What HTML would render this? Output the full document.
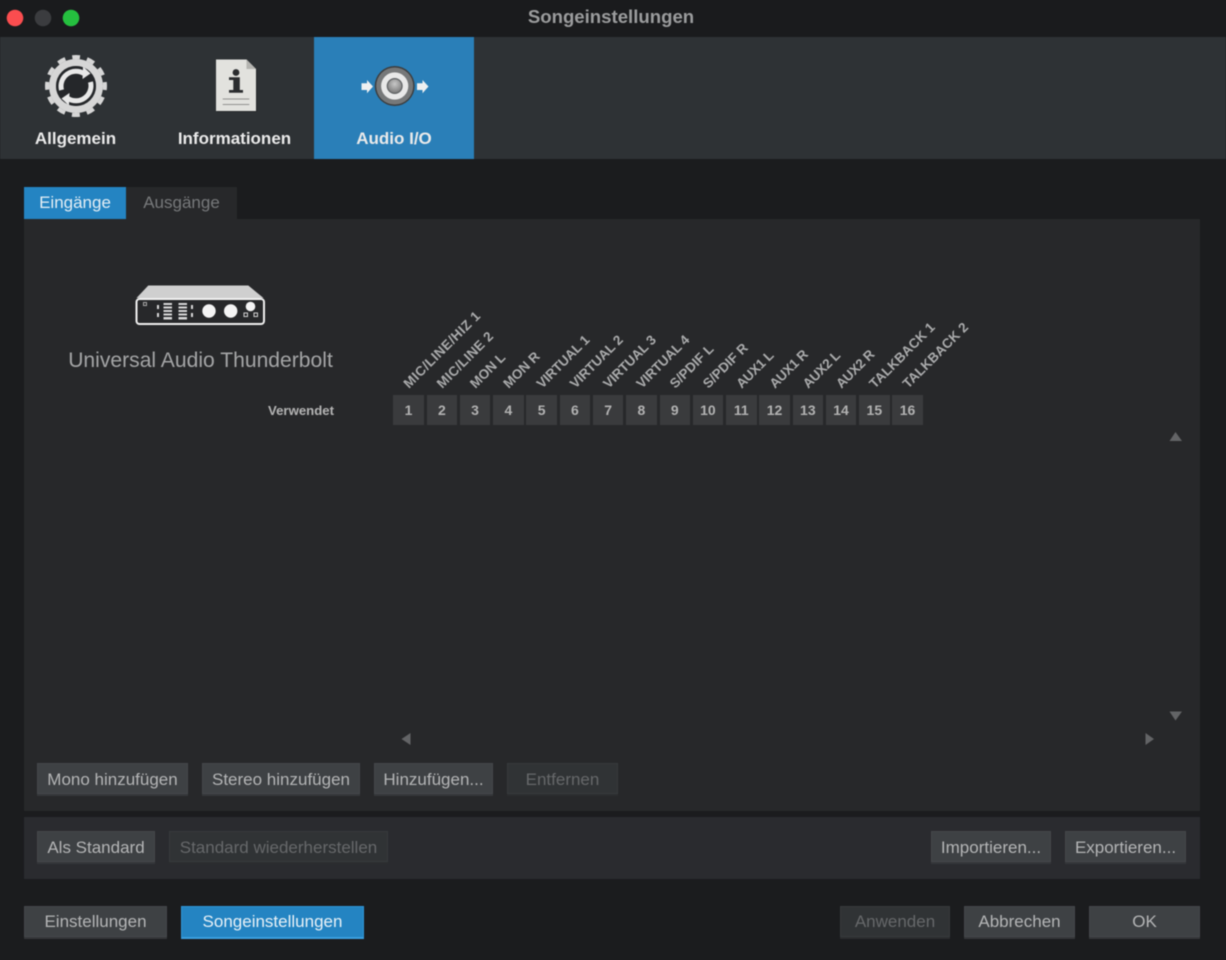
<!DOCTYPE html>
<html lang="de"><head><meta charset="utf-8"><title>Songeinstellungen</title>
<style>
html,body{margin:0;padding:0;background:#1b1c1e}
body{width:1226px;height:960px;position:relative;overflow:hidden;font-family:"Liberation Sans",sans-serif}
#w{position:absolute;left:0;top:0;width:1226px;height:960px;filter:blur(.45px)}
.a{position:absolute}
.b{position:absolute;box-sizing:border-box;height:33px;background:#3e4144;border-bottom:2px solid #35373a;box-shadow:inset 0 0 0 1px rgba(255,255,255,.035);color:#b4b5b6;font-size:17px;line-height:34px;text-align:center;white-space:nowrap}
.f{line-height:32px}
.d{background:#303335;color:#66686a;border-bottom-color:#2b2d2f}
.n{position:absolute;top:395px;width:30.5px;height:30px;background:#3a3b3d;color:#b2b2b2;font-weight:bold;font-size:14px;line-height:30px;text-align:center}
.t{position:absolute;top:37px;height:122px;text-align:center;color:#eaeaea;font-weight:bold;font-size:17px;line-height:20px}
.t span{position:absolute;left:0;right:0;top:92px}
svg{position:absolute;left:0;top:0}
</style></head><body><div id="w">
<div class="a" style="left:0;top:0;width:1226px;height:37px;background:#1a1b1d"></div>
<div class="a" style="left:0;top:0;width:1222px;text-align:center;font-weight:bold;font-size:18.6px;line-height:34px;color:#9b9c9d">Songeinstellungen</div>
<div class="a" style="left:0;top:37px;width:1226px;height:122px;background:#2e3235"></div>
<div class="a" style="left:314px;top:37px;width:160px;height:122px;background:#2a7fb8"></div>
<div class="t" style="left:0;width:151px"><span>Allgemein</span></div>
<div class="t" style="left:155px;width:159px"><span>Informationen</span></div>
<div class="t" style="left:314px;width:160px"><span>Audio I/O</span></div>

<div class="a" style="left:24px;top:187px;width:102px;height:32px;background:#2484c2;color:#e4eef5;font-size:17px;line-height:32px;text-align:center">Eingänge</div>
<div class="a" style="left:126px;top:187px;width:111px;height:32px;background:#27282a;color:#77797b;font-size:17px;line-height:32px;text-align:center">Ausgänge</div>
<div class="a" style="left:24px;top:219px;width:1176px;height:592px;background:#27282a"></div>
<div class="a" style="left:24px;top:817px;width:1176px;height:62px;background:#2a2b2f"></div>

<div class="a" style="left:40px;top:347px;width:321px;text-align:center;color:#a4a5a6;font-size:21.1px;line-height:27px;white-space:nowrap">Universal Audio Thunderbolt</div>
<div class="a" style="left:234px;top:403px;width:100px;text-align:right;color:#b4b4b4;font-weight:bold;font-size:13.2px;line-height:16px">Verwendet</div>

<svg width="1226" height="960" viewBox="0 0 1226 960" xmlns="http://www.w3.org/2000/svg">
<defs>
<radialGradient id="cone" cx="50%" cy="35%" r="70%"><stop offset="0" stop-color="#c8c8c8"/><stop offset="1" stop-color="#767676"/></radialGradient>
</defs>
<!-- traffic lights -->
<circle cx="15" cy="18" r="8.3" fill="#fb4d4f"/>
<circle cx="43" cy="18" r="8.3" fill="#3b3c3f"/>
<circle cx="71" cy="18" r="8.3" fill="#25c03f"/>
<!-- gear -->
<g fill="none">
<circle cx="76" cy="86" r="29" stroke="#d6d6d6" stroke-width="4" stroke-dasharray="8 7.18" stroke-dashoffset="4" transform="rotate(-90 76 86)"/>
<circle cx="76" cy="86" r="23.500" stroke="#d6d6d6" stroke-width="7"/>
<circle cx="76" cy="86" r="20" fill="#25272a"/>
<path d="M61.500 90A15 15 0 0 1 84 73.500" stroke="#e8e8e8" stroke-width="5"/>
<path d="M90.500 82A15 15 0 0 1 68 98.500" stroke="#e8e8e8" stroke-width="5"/>
</g>
<path d="M83 66.500L90.500 73.500 82.500 79Z" fill="#e8e8e8"/>
<path d="M69 105.500L61.500 98.500 69.500 93Z" fill="#e8e8e8"/>
<!-- document -->
<path d="M217 60.500H247.500L257 70V112H217Z" fill="#1f2123" opacity=".5"/>
<path d="M216 59.500H246.500L256 69V111H216Z" fill="#e2e2de"/>
<path d="M246.500 59.500V69H256Z" fill="#b4b4b0"/>
<circle cx="236" cy="72.500" r="3.400" fill="#2a2c2e"/>
<path d="M229 77.300H239.800V90H243V92.800H229V90H233.300V80H229Z" fill="#2a2c2e"/>
<path d="M222.700 99H249.300M222.700 104.500H249.300" stroke="#929290" stroke-width="1"/>
<!-- speaker -->
<circle cx="394.700" cy="86" r="20" fill="#3c3e40"/>
<circle cx="394.700" cy="86" r="18.500" fill="#767879"/>
<circle cx="394.700" cy="86" r="13.600" fill="#e8e8e8"/>
<circle cx="394.700" cy="86" r="8" fill="#5f6264"/>
<circle cx="394.700" cy="86" r="6.800" fill="url(#cone)"/>
<path d="M361.500 83.300H367V80L373 86.500 367 93.300V90H361.500Z" fill="#eef0f1"/>
<path d="M417 83.300H422.500V80L428.500 86.500 422.500 93.300V90H417Z" fill="#eef0f1"/>
<!-- interface -->
<path d="M136.500 298L148.300 285.500H248.300L263.500 298Z" fill="#cfcfcf"/>
<rect x="136.500" y="299" width="127.500" height="25" rx="3" fill="#27282a" stroke="#f0f0f0" stroke-width="2"/>
<rect x="143.500" y="302.500" width="3" height="3" fill="none" stroke="#a8a8a8" stroke-width="1"/>
<g fill="#d8d8d8">
<rect x="157" y="305" width="2" height="4"/><rect x="157" y="313" width="2" height="4"/>
<rect x="163.500" y="303" width="8.500" height="2"/><rect x="163.500" y="306.500" width="8.500" height="2"/><rect x="163.500" y="310" width="8.500" height="2"/><rect x="163.500" y="313.500" width="8.500" height="2"/><rect x="163.500" y="317" width="8.500" height="2.500"/>
<rect x="178.500" y="303" width="8.500" height="2"/><rect x="178.500" y="306.500" width="8.500" height="2"/><rect x="178.500" y="310" width="8.500" height="2"/><rect x="178.500" y="313.500" width="8.500" height="2"/><rect x="178.500" y="317" width="8.500" height="2.500"/>
<rect x="191" y="305" width="2" height="4"/><rect x="191" y="313" width="2" height="4"/>
</g>
<circle cx="209" cy="311" r="6.700" fill="#f4f4f4"/>
<circle cx="230.700" cy="311" r="6.700" fill="#f4f4f4"/>
<circle cx="250.500" cy="306.500" r="4.800" fill="#f4f4f4"/>
<rect x="244" y="313" width="3.500" height="3.500" fill="none" stroke="#d0d0d0" stroke-width="1"/>
<rect x="254" y="313" width="3.500" height="3.500" fill="none" stroke="#d0d0d0" stroke-width="1"/>
<!-- rotated labels -->
<g font-family="'Liberation Sans',sans-serif" font-weight="bold" font-size="13.5" fill="#aaabac">
<text letter-spacing=".45" transform="translate(409 389) rotate(-45)">MIC/LINE/HIZ 1</text>
<text letter-spacing=".3" transform="translate(442.300 389) rotate(-45)">MIC/LINE 2</text>
<text transform="translate(475.500 389) rotate(-45)">MON L</text>
<text transform="translate(508.800 389) rotate(-45)">MON R</text>
<text letter-spacing="-.14" transform="translate(542.100 389) rotate(-45)">VIRTUAL 1</text>
<text letter-spacing="-.14" transform="translate(575.400 389) rotate(-45)">VIRTUAL 2</text>
<text letter-spacing="-.14" transform="translate(608.600 389) rotate(-45)">VIRTUAL 3</text>
<text letter-spacing="-.14" transform="translate(641.900 389) rotate(-45)">VIRTUAL 4</text>
<text transform="translate(675.200 389) rotate(-45)">S/PDIF L</text>
<text transform="translate(708.400 389) rotate(-45)">S/PDIF R</text>
<text letter-spacing="-.3" transform="translate(741.700 389) rotate(-45)">AUX1 L</text>
<text letter-spacing="-.3" transform="translate(775 389) rotate(-45)">AUX1 R</text>
<text letter-spacing="-.3" transform="translate(808.300 389) rotate(-45)">AUX2 L</text>
<text letter-spacing="-.3" transform="translate(841.500 389) rotate(-45)">AUX2 R</text>
<text letter-spacing=".1" transform="translate(874.800 389) rotate(-45)">TALKBACK 1</text>
<text letter-spacing=".1" transform="translate(908.100 389) rotate(-45)">TALKBACK 2</text>
</g>
<!-- scroll arrows -->
<g fill="#636466">
<path d="M1169.500 441L1175.500 432 1182 441Z"/>
<path d="M1169.500 711.500H1182L1175.500 720.500Z"/>
<path d="M410.500 733V745L401.500 739Z"/>
<path d="M1145.500 733V745L1154 739Z"/>
</g>
</svg>

<div class="n" style="left:393.300px">1</div><div class="n" style="left:426.600px">2</div><div class="n" style="left:459.800px">3</div><div class="n" style="left:493.100px">4</div>
<div class="n" style="left:526.400px">5</div><div class="n" style="left:559.700px">6</div><div class="n" style="left:592.900px">7</div><div class="n" style="left:626.200px">8</div>
<div class="n" style="left:659.500px">9</div><div class="n" style="left:692.700px">10</div><div class="n" style="left:726px">11</div><div class="n" style="left:759.300px">12</div>
<div class="n" style="left:792.600px">13</div><div class="n" style="left:825.800px">14</div><div class="n" style="left:859.100px">15</div><div class="n" style="left:892.300px">16</div>

<div class="b" style="left:37px;top:763px;width:151px">Mono hinzufügen</div>
<div class="b" style="left:202px;top:763px;width:158px">Stereo hinzufügen</div>
<div class="b" style="left:374px;top:763px;width:119px">Hinzufügen...</div>
<div class="b d" style="left:507px;top:763px;width:111px">Entfernen</div>
<div class="b" style="left:37px;top:831px;width:118px">Als Standard</div>
<div class="b d" style="left:169px;top:831px;width:219px">Standard wiederherstellen</div>
<div class="b" style="left:931px;top:831px;width:120px">Importieren...</div>
<div class="b" style="left:1065px;top:831px;width:121px">Exportieren...</div>
<div class="b f" style="left:24px;top:906px;width:143px">Einstellungen</div>
<div class="b f" style="left:181px;top:906px;width:183px;background:#2484c2;border:1px solid #2f95d6;border-bottom:2px solid #3a9fe0;box-shadow:none;color:#e8f1f7;line-height:29px">Songeinstellungen</div>
<div class="b d f" style="left:840px;top:906px;width:110px">Anwenden</div>
<div class="b f" style="left:964px;top:906px;width:111px">Abbrechen</div>
<div class="b f" style="left:1089px;top:906px;width:111px">OK</div>
</div></body></html>
